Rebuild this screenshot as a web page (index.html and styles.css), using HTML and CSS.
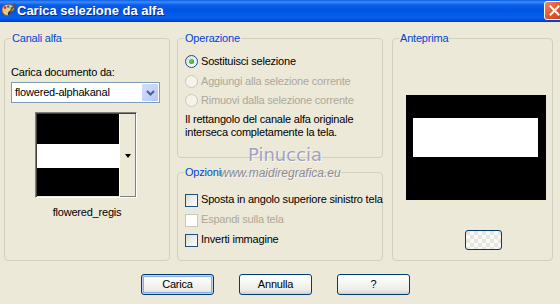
FILE: index.html
```html
<!DOCTYPE html>
<html lang="it">
<head>
  <meta charset="UTF-8">
  <meta name="viewport" content="width=device-width, initial-scale=1.0">
  <title>Carica selezione da alfa</title>
  <link rel="stylesheet" href="styles.css">
</head>
<body>
  <div class="window">
    <div class="titlebar">
      <svg class="app-icon" width="15" height="15" viewBox="0 0 15 15">
        <path d="M7 1.5C3.4 1.5 1 3.8 1 6.8c0 3 2.4 5.7 5.2 5.7 1.6 0 1.7-1.4 1.2-2.4-.5-1 .3-1.6 1.4-1.6 2.6 0 4.2-1 4.2-3 0-2.4-2.4-4-6-4z" fill="#EBCB8E" stroke="#8A5A2A" stroke-width=".8"/>
        <circle cx="4" cy="4.6" r="1.3" fill="#E02020"/>
        <circle cx="7.2" cy="3.6" r="1.2" fill="#1E5BE0"/>
        <circle cx="3.4" cy="8" r="1.2" fill="#F0D020"/>
        <circle cx="10.4" cy="5" r="1.1" fill="#30A030"/>
        <path d="M14 1.2 L8.6 9.4" stroke="#7A4A1A" stroke-width="1.6" stroke-linecap="round"/>
        <path d="M8.6 9.4 L7.6 11.2" stroke="#303030" stroke-width="1.6" stroke-linecap="round"/>
      </svg>
      <span class="title">Carica selezione da alfa</span>
      <span class="close">
        <svg width="11" height="11" viewBox="0 0 11 11">
          <path d="M1.5 1.5 L9.5 9.5 M9.5 1.5 L1.5 9.5" stroke="#fff" stroke-width="2" stroke-linecap="square"/>
        </svg>
      </span>
    </div>

    <div class="body">
      <div class="panels">
        <div class="group group-canali">
          <span class="legend">Canali alfa</span>
          <div class="field-label">Carica documento da:</div>
          <div class="select">
            <span class="select-text">flowered-alphakanal</span>
            <span class="select-btn">
              <svg width="9" height="6" viewBox="0 0 9 6"><path d="M1 1 L4.5 4.5 L8 1" fill="none" stroke="#4D6185" stroke-width="2"/></svg>
            </span>
          </div>
          <div class="thumb">
            <div class="thumb-img">
              <div class="stripe-black s1"></div>
              <div class="stripe-white"></div>
              <div class="stripe-black s3"></div>
            </div>
            <div class="thumb-scroll"><span class="tri"></span></div>
          </div>
          <div class="thumb-caption">flowered_regis</div>
        </div>

        <div class="middle">
          <div class="group group-oper">
            <span class="legend">Operazione</span>
            <div class="opt-row"><span class="radio checked"></span><span>Sostituisci selezione</span></div>
            <div class="opt-row disabled"><span class="radio"></span><span>Aggiungi alla selezione corrente</span></div>
            <div class="opt-row disabled"><span class="radio"></span><span>Rimuovi dalla selezione corrente</span></div>
            <p class="desc">Il rettangolo del canale alfa originale<br>interseca completamente la tela.</p>
          </div>
          <div class="group group-opz">
            <span class="legend">Opzioni</span>
            <div class="opt-row check-row"><span class="check"></span><span class="check-text">Sposta in angolo superiore sinistro tela</span></div>
            <div class="opt-row check-row disabled"><span class="check"></span><span class="check-text">Espandi sulla tela</span></div>
            <div class="opt-row check-row"><span class="check"></span><span class="check-text">Inverti immagine</span></div>
          </div>
        </div>

        <div class="group group-ante">
          <span class="legend">Anteprima</span>
          <div class="preview"><div class="preview-band"></div></div>
          <div class="zoom-btn"></div>
        </div>
      </div>

      <div class="buttons">
        <div class="btn default">Carica</div>
        <div class="btn">Annulla</div>
        <div class="btn">?</div>
      </div>
    </div>

    <div class="wm-name">Pinuccia</div>
    <div class="wm-url">www.maidiregrafica.eu</div>
  </div>
</body>
</html>
```

FILE: styles.css
```css
* {
  box-sizing: border-box;
}
body {
  margin: 0;
  font-family: "Liberation Sans", Arial, sans-serif;
  font-size: 11px;
  line-height: 13px;
  color: #000;
  background: #ECE9D8;
}
.window {
  width: 560px;
  height: 304px;
  position: relative;
  overflow: hidden;
  background: #ECE9D8;
}

/* title bar */
.titlebar {
  height: 22px;
  display: flex;
  align-items: center;
  padding-left: 1px;
  background: linear-gradient(#0A5FE8 0, #3D8AF7 2px, #0A5CE9 5px, #0054E3 50%, #0760EF 85%, #0044CF 100%);
  border-bottom: 1px solid #0A3FB0;
}
.app-icon {
  flex: none;
}
.title {
  margin-left: 1px;
  color: #fff;
  font-weight: bold;
  font-size: 13px;
  text-shadow: 1px 1px 0 #0A2A8A;
}
.close {
  margin-left: auto;
  margin-right: -5px;
  width: 21px;
  height: 19px;
  display: flex;
  align-items: center;
  padding-left: 4px;
  border: 1px solid #fff;
  border-radius: 3px;
  background: linear-gradient(135deg, #F08A66 0%, #E35A33 45%, #C4401E 100%);
}

/* layout */
.body {
  padding: 16px 0 0 4px;
  letter-spacing: -0.2px;
}
.panels {
  display: flex;
  align-items: flex-start;
}
.group {
  position: relative;
  border: 1px solid #D0D0BF;
  border-radius: 4px;
}
.legend {
  position: absolute;
  top: -7px;
  left: 6px;
  padding: 0 1px;
  color: #0046D5;
  background: #ECE9D8;
  line-height: 13px;
}
.group-canali {
  width: 166px;
  height: 223px;
  padding: 27px 0 0 6px;
}
.middle {
  width: 206px;
  margin-left: 7px;
  display: flex;
  flex-direction: column;
  gap: 14px;
}
.group-oper {
  height: 120px;
  padding: 16px 0 0 7px;
}
.group-opz {
  height: 89px;
  padding: 21px 0 0 7px;
}
.group-ante {
  width: 161px;
  height: 223px;
  margin-left: 9px;
  padding: 56px 0 0 13px;
}

/* alpha channel source */
.select {
  width: 149px;
  height: 21px;
  margin-top: 3px;
  display: flex;
  align-items: center;
  border: 1px solid #7F9DB9;
  background: #fff;
}
.select-text {
  flex: 1;
  padding-left: 3px;
}
.select-btn {
  width: 16px;
  height: 17px;
  margin-right: 1px;
  display: flex;
  align-items: center;
  justify-content: center;
  border-radius: 1px;
  background: linear-gradient(135deg, #D2DEFC, #B4C8F8);
}
.thumb {
  width: 102px;
  height: 86px;
  margin: 9px 0 0 24px;
  display: flex;
  border-style: solid;
  border-width: 1px;
  border-color: #808080 #fff #fff #808080;
  box-shadow: inset 1px 1px 0 #404040;
  padding: 1px 0 0 1px;
}
.thumb-img {
  width: 82px;
}
.stripe-black {
  background: #000;
}
.s1 { height: 30px; }
.s3 { height: 28px; }
.stripe-white {
  height: 24px;
  background: #fff;
}
.thumb-scroll {
  width: 17px;
  display: flex;
  align-items: center;
  justify-content: center;
  border-left: 1px solid #fff;
  background: #ECE9D8;
  box-shadow: inset -1px -1px 0 #808080;
}
.tri {
  width: 0;
  height: 0;
  border-left: 3.5px solid transparent;
  border-right: 3.5px solid transparent;
  border-top: 4px solid #000;
}
.thumb-caption {
  margin-top: 8px;
  width: 152px;
  text-align: center;
}

/* options */
.opt-row {
  display: flex;
  align-items: center;
  gap: 3px;
  height: 13px;
  margin-bottom: 6.5px;
  white-space: nowrap;
}
.disabled {
  color: #ACA899;
}
.radio {
  width: 13px;
  height: 13px;
  flex: none;
  display: flex;
  align-items: center;
  justify-content: center;
  border: 1px solid #1C5180;
  border-radius: 50%;
  background: linear-gradient(135deg, #DCDCD7, #fff);
}
.radio.checked::after {
  content: "";
  width: 5px;
  height: 5px;
  border-radius: 50%;
  background: radial-gradient(circle at 40% 40%, #5CD65C, #1E9A1E);
}
.disabled .radio {
  border-color: #CAC8BB;
  background: #F5F4EA;
}
.desc {
  margin: 0;
  margin-top: -0.5px;
}
.check-row {
  align-items: flex-start;
  margin-bottom: 7px;
}
.check {
  width: 13px;
  height: 13px;
  flex: none;
  border: 1px solid #1C5180;
  background: linear-gradient(135deg, #DCDCD7, #fff);
}
.disabled .check {
  border-color: #CAC8BB;
  background: #fff;
}
.check-text {
  margin-top: -1px;
}

/* preview */
.preview {
  width: 140px;
  height: 105px;
  padding: 23px 0 0 7px;
  background: #000;
}
.preview-band {
  width: 125px;
  height: 39px;
  background: #fff;
}
.zoom-btn {
  width: 37px;
  height: 20px;
  margin: 30px 0 0 59px;
  border: 1px solid #003C74;
  border-radius: 3px;
  background: repeating-conic-gradient(#F8F8F4 0 25%, #E6E6E0 0 50%) 0 0 / 8px 8px;
}

/* dialog buttons */
.buttons {
  display: flex;
  gap: 25px;
  margin-top: 13px;
  padding-left: 137px;
}
.btn {
  width: 73px;
  height: 21px;
  display: flex;
  align-items: center;
  justify-content: center;
  border: 1px solid #003C74;
  border-radius: 3px;
  background: linear-gradient(#FFFFFF 0%, #F4F4F0 50%, #ECEBE6 80%, #D6D0C5 100%);
}
.btn.default {
  box-shadow: inset 0 0 0 1px #BCD4F6, inset 0 0 0 2px #89ADE4;
}

/* watermark */
.wm-name {
  position: absolute;
  left: 248px;
  top: 145px;
  font-family: "DejaVu Sans", sans-serif;
  font-size: 18px;
  line-height: 20px;
  color: #9FA2C0;
  text-shadow: 1px 1px 0 rgba(255, 255, 255, .8);
}
.wm-url {
  position: absolute;
  left: 220px;
  top: 166px;
  font-style: italic;
  font-size: 12px;
  line-height: 14px;
  color: #8C8C96;
  text-shadow: 1px 1px 0 rgba(255, 255, 255, .6);
}
```
